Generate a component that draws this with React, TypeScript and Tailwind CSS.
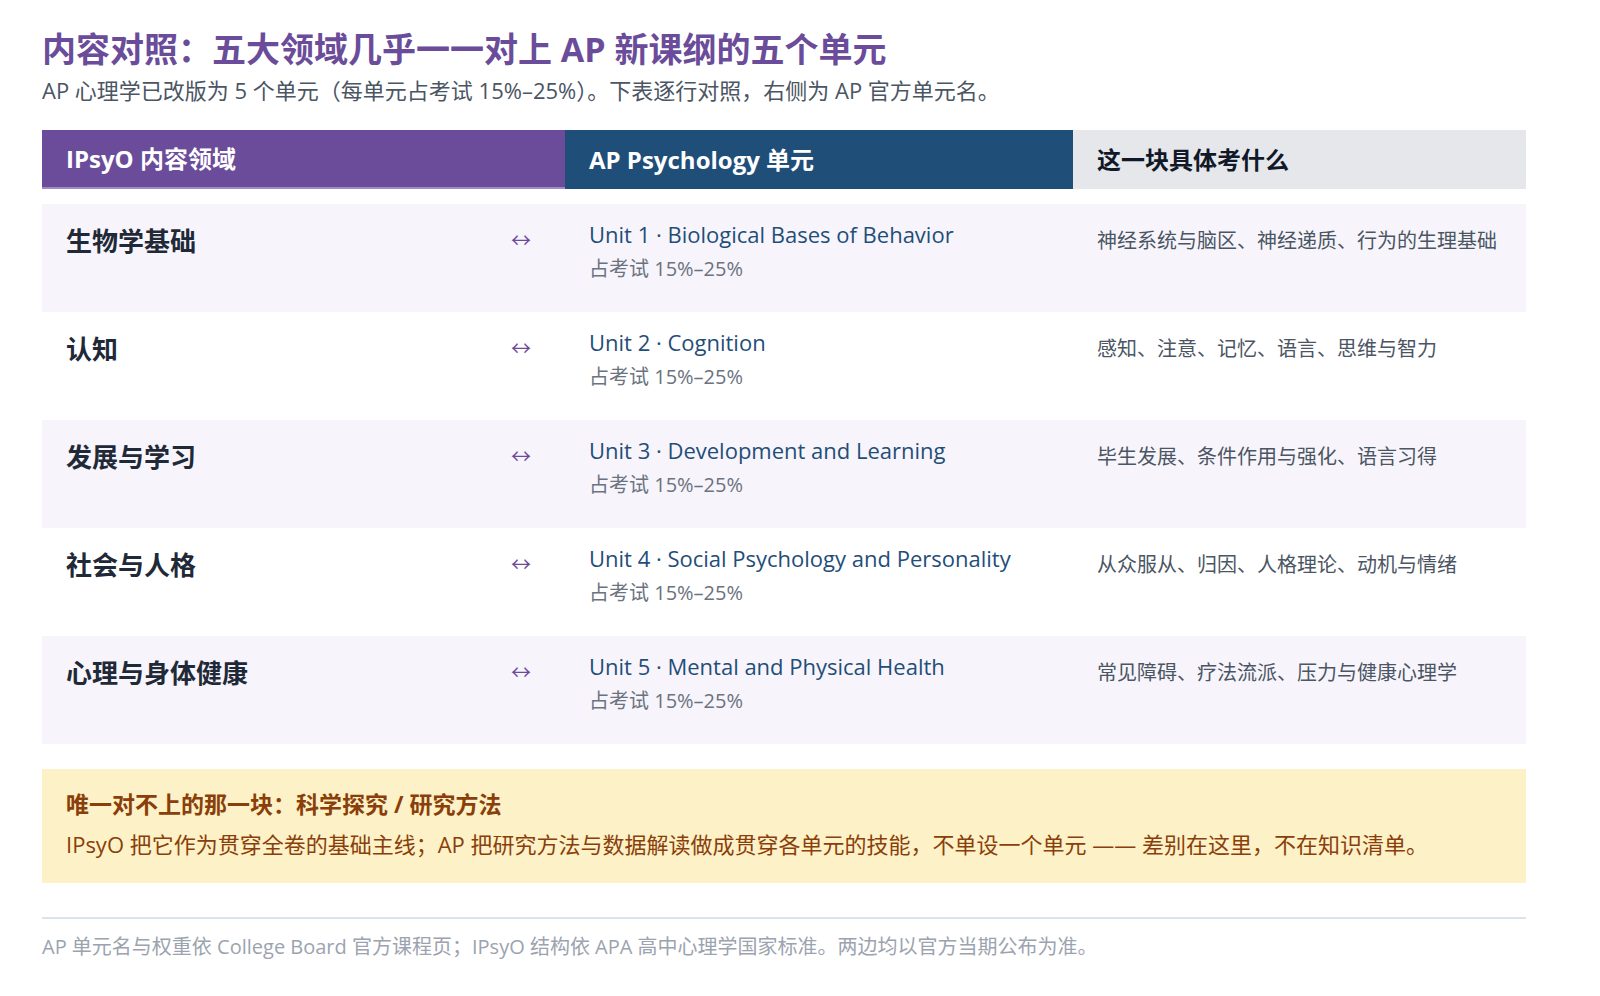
export default function App() {
  const rows = [
    ["生物学基础", "Unit 1 · Biological Bases of Behavior", "神经系统与脑区、神经递质、行为的生理基础"],
    ["认知", "Unit 2 · Cognition", "感知、注意、记忆、语言、思维与智力"],
    ["发展与学习", "Unit 3 · Development and Learning", "毕生发展、条件作用与强化、语言习得"],
    ["社会与人格", "Unit 4 · Social Psychology and Personality", "从众服从、归因、人格理论、动机与情绪"],
    ["心理与身体健康", "Unit 5 · Mental and Physical Health", "常见障碍、疗法流派、压力与健康心理学"],
  ];
  return (
    <div className="w-[1600px] h-[996px] bg-white px-[42px] pt-[26px]" style={{ fontFamily: '"Open Sans","Noto Sans CJK SC",sans-serif' }}>
      <div className="w-[1484px]">
        <h1 className="text-[34px] leading-[46px] font-bold text-[#6b4c9a]">内容对照：五大领域几乎一一对上 AP 新课纲的五个单元</h1>
        <p className="text-[22px] leading-[32px] text-[#4b5563] mt-[2px]">AP 心理学已改版为 5 个单元（每单元占考试 15%–25%）。下表逐行对照，右侧为 AP 官方单元名。</p>
        <div className="mt-[24px] grid grid-cols-[523px_508px_453px] h-[59px] text-[24px] font-bold items-center">
          <div className="bg-[#6b4c9a] text-white h-full flex items-center pl-[24px] border-b-2 border-[#a08cc4]">IPsyO 内容领域</div>
          <div className="bg-[#1f4e79] text-white h-full flex items-center pl-[24px]">AP Psychology 单元</div>
          <div className="bg-[#e5e7eb] text-[#111827] h-full flex items-center pl-[24px]">这一块具体考什么</div>
        </div>
        <div className="mt-[15px]">
          {rows.map((r, i) => (
            <div key={i} className={`grid grid-cols-[523px_508px_453px] h-[108px] ${i % 2 === 0 ? "bg-[#f7f5fb]" : "bg-white"}`}>
              <div className="flex justify-between pl-[24px] pr-[34px] pt-[20px]">
                <span className="text-[26px] leading-[34px] font-bold text-[#1f2937]">{r[0]}</span>
                <span className="text-[20px] leading-[34px] text-[#6b4c9a]">↔</span>
              </div>
              <div className="pl-[24px] pt-[15px]">
                <div className="text-[22px] leading-[30px] text-[#1f4e79]">{r[1]}</div>
                <div className="text-[20px] leading-[28px] text-[#6b7280] mt-[6px]">占考试 15%–25%</div>
              </div>
              <div className="pl-[24px] pt-[22px] text-[20px] leading-[30px] text-[#4b5563] whitespace-nowrap">{r[2]}</div>
            </div>
          ))}
        </div>
        <div className="mt-[25px] bg-[#fdf1c7] h-[114px] pl-[24px] pt-[19px]">
          <div className="text-[23px] leading-[32px] font-bold text-[#8a3f0a]">唯一对不上的那一块：科学探究 / 研究方法</div>
          <div className="text-[22px] leading-[32px] text-[#8a3f0a] mt-[8px] whitespace-nowrap">IPsyO 把它作为贯穿全卷的基础主线；AP 把研究方法与数据解读做成贯穿各单元的技能，不单设一个单元 —— 差别在这里，不在知识清单。</div>
        </div>
        <div className="mt-[34px] border-t-2 border-[#dbe3ec] pt-[14px] text-[20px] leading-[28px] text-[#9ca3af]">AP 单元名与权重依 College Board 官方课程页；IPsyO 结构依 APA 高中心理学国家标准。两边均以官方当期公布为准。</div>
      </div>
    </div>
  );
}
